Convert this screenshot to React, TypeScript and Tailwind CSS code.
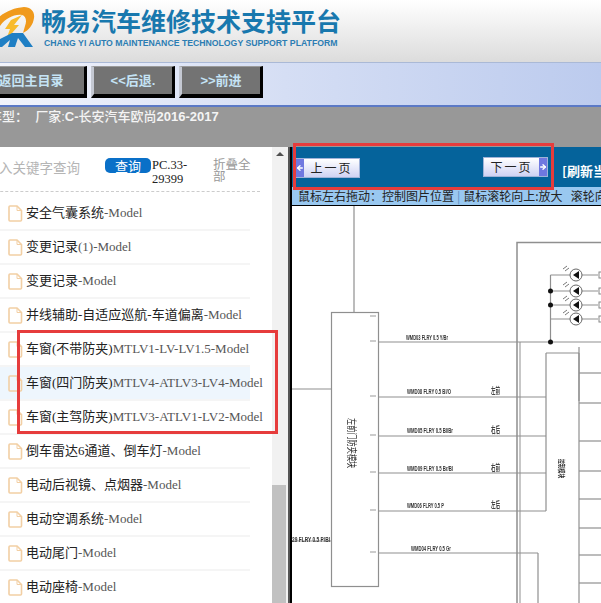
import { ArrowLeft, ArrowRight } from 'lucide-react';

const SERIF = "font-['Liberation_Serif','Noto_Sans_CJK_SC',serif]";

const rows = [
  { name: '安全气囊系统', suffix: '-Model' },
  { name: '变更记录', suffix: '(1)-Model' },
  { name: '变更记录', suffix: '-Model' },
  { name: '并线辅助-自适应巡航-车道偏离', suffix: '-Model' },
  { name: '车窗(不带防夹)', suffix: 'MTLV1-LV-LV1.5-Model' },
  { name: '车窗(四门防夹)', suffix: 'MTLV4-ATLV3-LV4-Model', active: true },
  { name: '车窗(主驾防夹)', suffix: 'MTLV3-ATLV1-LV2-Model' },
  { name: '倒车雷达6通道、倒车灯', suffix: '-Model' },
  { name: '电动后视镜、点烟器', suffix: '-Model' },
  { name: '电动空调系统', suffix: '-Model' },
  { name: '电动尾门', suffix: '-Model' },
  { name: '电动座椅', suffix: '-Model' },
];

function Logo() {
  return (
    <svg width="42" height="50" viewBox="-6 0 42 50" className="shrink-0">
      <path d="M-6 22 C2 13 12 8 24 7 C31 7 35 12 34 18 C33 25 29 30 23 33 L25 26 C27 21 26 16 22 15 C14 14 6 18 0 26 Z" fill="#f09a1c" />
      <path d="M22 15 L14 25 L19 25 L6 40 L10 29 L5 29 L11 20 Z" fill="#f8bb2c" />
      <path d="M12 33 L23 33 L33 47 L25 47 L18 38 L15 47 L8 47 L10 40 L2 47 L-6 47 L-2 40 Z" fill="#1f7fc4" />
    </svg>
  );
}

function NavButton({ label, wide }: { label: string; wide?: boolean }) {
  return (
    <button
      className={`${wide ? 'w-[112px]' : 'w-[84px]'} h-[32px] bg-[#737373] border-l-[3px] border-t-[1px] border-r-[3px] border-b-[4px] border-l-[#c4c8d2] border-t-[#9a9a9a] border-r-black border-b-black text-[13px] font-bold text-[#c5e3f5] font-['Liberation_Sans','Noto_Sans_CJK_SC',sans-serif]`}
    >
      {label}
    </button>
  );
}

function FileIcon() {
  return (
    <svg width="15" height="17" viewBox="0 0 15 17" className="shrink-0" fill="none" stroke="#f2cfa4" strokeWidth="1.6">
      <path d="M2 1h7l4.5 4.5V15a1 1 0 0 1-1 1H2a1 1 0 0 1-1-1V2a1 1 0 0 1 1-1z" />
      <path d="M9 1v4.500h4.500" strokeWidth="1" />
    </svg>
  );
}

function Sidebar() {
  return (
    <div className="w-[318px] shrink-0 flex bg-white">
      <div className="w-[302px] shrink-0">
        <div className="h-[45px] flex items-start pt-[11px] border-b border-dashed border-[#cccccc] w-[290px]">
          <div className="w-[135px] shrink-0 pl-[2px] text-[13.5px] leading-[18px] text-[#b5b5b5] whitespace-nowrap font-['Noto_Sans_CJK_SC',sans-serif]">
            请输入关键字查询
          </div>
          <div className="w-[46px] h-[15px] shrink-0 rounded-[5px] bg-[#0a70c8] text-white text-[13px] leading-[15px] text-center font-['Noto_Sans_CJK_SC',sans-serif]">
            查询
          </div>
          <div className={`w-[40px] shrink-0 ml-[1px] text-[12.5px] leading-[14px] text-[#222] ${SERIF}`}>PC.33-29399</div>
          <div className="w-[38px] shrink-0 ml-[21px] text-[12.5px] leading-[12px] text-[#999] font-['Noto_Sans_CJK_SC',sans-serif]">
            折叠全部
          </div>
        </div>
        <div className="w-[280px] mt-[5px]">
          {rows.map((row, i) => (
            <div
              key={i}
              className={`h-[34px] flex items-center gap-[3px] pl-[38px] whitespace-nowrap border-b-2 border-[#f5f5f5] ${row.active ? 'bg-[#eef6fd]' : ''}`}
            >
              <FileIcon />
              <span className={`text-[13px] text-[#222] ${SERIF}`}>
                {row.name}
                <span className="text-[#555]">{row.suffix}</span>
              </span>
            </div>
          ))}
        </div>
      </div>
      <div className="w-[16px] shrink-0 bg-[#f1f1f1] flex flex-col justify-between">
        <div className="h-[20px] flex justify-center pt-[5px]">
          <div className="w-0 h-0 border-x-[4px] border-x-transparent border-b-[4px] border-b-[#505050]" />
        </div>
        <div className="h-[118px] w-[14px] bg-[#c1c1c1]" />
      </div>
    </div>
  );
}

function PageButton({ label, dir }: { label: string; dir: 'prev' | 'next' }) {
  const arrow = (
    <div className="w-[8px] self-stretch flex items-center justify-center bg-[#6f78e0]">
      {dir === 'prev' ? (
        <ArrowLeft size={8} strokeWidth={4} color="#fff" />
      ) : (
        <ArrowRight size={8} strokeWidth={4} color="#fff" />
      )}
    </div>
  );
  return (
    <div className="h-[20px] flex items-center border border-[#9fb3d8] bg-gradient-to-b from-[#ffffff] to-[#cfd2f3]">
      {dir === 'prev' && arrow}
      <span className="w-[55px] text-center text-[12px] leading-[16px] tracking-[2px] text-[#222] whitespace-pre font-['Noto_Sans_CJK_SC',sans-serif]">
        {label}
      </span>
      {dir === 'next' && arrow}
    </div>
  );
}

function Schematic() {
  const stroke = '#8f8f8f';
  const wires: [number, number, number, number][] = [
    [62, 0, 62, 106],
    [86, 136, 310, 136],
    [86, 191, 254, 191],
    [86, 230, 254, 230],
    [86, 267, 254, 267],
    [86, 305, 254, 305],
    [86, 347, 246, 347],
    [246, 347, 246, 397],
    [0, 183, 39, 183],
    [0, 335, 39, 335],
    [254, 147, 287, 147],
    [254, 147, 254, 305],
    [287, 147, 287, 195],
    [287, 167, 310, 167],
    [287, 141, 287, 397],
    [287, 197, 310, 197],
    [287, 235, 310, 235],
    [287, 265, 310, 265],
    [287, 293, 310, 293],
    [287, 322, 310, 322],
    [287, 349, 310, 349],
    [287, 377, 310, 377],
    [258.500, 69, 258.500, 136],
    [258.500, 69, 306, 69],
    [258.500, 85, 306, 85],
    [258.500, 99, 306, 99],
    [258.500, 113, 306, 113],
  ];
  const labels: [string, number, number, number][] = [
    ['WMD03 FLRY 0.5 Y/Br', 114, 134, 42],
    ['WMD08 FLRY 0.5 Bl/O', 115, 188, 44],
    ['WMD05 FLRY 0.5 Bl/Br', 115, 227, 46],
    ['WMD09 FLRY 0.5 Br/Bl', 115, 265, 46],
    ['WMD06 FLRY 0.5 P', 115, 302, 37],
    ['WMD04 FLRY 0.5 Gr', 119, 345, 40],
    ['29 FLRY 0.5 P/Bl', 0, 336, 38],
  ];
  const sides: [string, number][] = [['左前', 188], ['右后', 227], ['右前', 265], ['左后', 302]];
  const pins = [111, 136, 191, 230, 267, 305, 347];
  return (
    <svg viewBox="0 0 310 397" className="w-[310px] h-[397px] block blur-[0.3px]">
      <rect x="39.500" y="106.500" width="47" height="274" fill="none" stroke={stroke} strokeWidth="1.200" />
      <path d="M225 397V36.500H310" fill="none" stroke={stroke} strokeWidth="1.500" />
      <path d="M228 397V136" fill="none" stroke={stroke} />
      {wires.map(([x1, y1, x2, y2], i) => (
        <line key={i} x1={x1} y1={y1} x2={x2} y2={y2} stroke={stroke} strokeWidth="1.200" />
      ))}
      {pins.map(y => (
        <line key={y} x1="78" y1={y - 1} x2="84" y2={y - 1} stroke="#999" strokeWidth="1" />
      ))}
      {[69, 85, 99, 113].map(y => (
        <g key={y}>
          <circle cx="284" cy={y} r="6" fill="#fff" stroke="#666" />
          <path d={`M281 ${y}l6 -4v8z`} fill="#111" />
          <path d={`M271 ${y - 6}l4 -3m-2 5l4 -3`} stroke="#777" />
          <rect x="307" y={y - 3} width="6" height="6" fill="#fff" stroke="#888" />
        </g>
      ))}
      {[85, 99, 136].map(y => (
        <circle key={y} cx="258.500" cy={y} r="2.500" fill="#111" />
      ))}
      {labels.map(([t, x, y, w]) => (
        <text key={t} x={x} y={y} textLength={w} lengthAdjust="spacingAndGlyphs" fontSize="7.500" fontWeight="700" fill="#333" fontFamily="Liberation Sans, sans-serif">
          {t}
        </text>
      ))}
      {sides.map(([t, y]) => (
        <text key={y} x="199" y={y} textLength="9" lengthAdjust="spacingAndGlyphs" fontSize="9" fontWeight="700" fill="#444" fontFamily="Noto Sans CJK SC, sans-serif">
          {t}
        </text>
      ))}
      <text fontSize="7.200" fill="#333" fontFamily="Noto Sans CJK SC, sans-serif" transform="translate(56 212) rotate(90) scale(1 1.500)">
        左前门防夹模块
      </text>
      <text fontSize="4.800" fontWeight="700" fill="#333" fontFamily="Noto Sans CJK SC, sans-serif" transform="translate(267 253) rotate(90) scale(1 1.500)">
        控制模块
      </text>
    </svg>
  );
}

export default function App() {
  return (
    <div className="relative w-[601px] h-[603px] overflow-hidden bg-white">
      <div className="w-[631px] -ml-[30px]">
        {/* header */}
        <div className="h-[62px] bg-gradient-to-b from-white to-[#dcdcdc] flex items-start pl-[24px]">
          <Logo />
          <div className="ml-[5px] pt-[4px]">
            <div className="text-[25px] leading-[32px] font-bold text-[#1878ae] whitespace-nowrap font-['Noto_Sans_CJK_SC',sans-serif]">
              畅易汽车维修技术支持平台
            </div>
            <div className="mt-[2px] ml-[3px] text-[8.700px] leading-[11px] font-bold text-[#2c7db3] whitespace-nowrap font-['Liberation_Sans',sans-serif]">
              CHANG YI AUTO MAINTENANCE TECHNOLOGY SUPPORT PLATFORM
            </div>
          </div>
        </div>
        {/* nav */}
        <div className="h-[45px] border-t border-[#aab9d6] border-b-[2px] border-b-[#5b79c6] bg-gradient-to-r from-[#f5f6fc] via-[#d5def4] to-[#bccbee] flex items-start gap-[4px] pl-[5px] pt-[3px]">
          <NavButton label="返回主目录" wide />
          <NavButton label="<<后退." />
          <NavButton label=">>前进" />
        </div>
        {/* vehicle info */}
        <div className="h-[40px] bg-[#989898] pl-[19px] pt-[1px] text-[13px] leading-[18px] font-medium text-[#f4f4f4] whitespace-pre font-['Liberation_Sans','Noto_Sans_CJK_SC',sans-serif]">
          车型：  厂家:<span className="font-bold">C-</span>长安汽车欧尚<span className="font-bold">2016-2017</span>
        </div>
        {/* body */}
        <div className="h-[456px] flex">
          <Sidebar />
          <div className="w-[2px] shrink-0 bg-[#555]" />
          <div className="flex-1 min-w-0 border-l-[2px] border-black overflow-hidden">
            <div className="h-[40px] bg-[#05639b] flex items-start pl-[3px] pt-[10px] whitespace-nowrap">
              <div className="mt-[1px]">
                <PageButton label="上一页" dir="prev" />
              </div>
              <div className="ml-[123px]">
                <PageButton label="下一页" dir="next" />
              </div>
              <div className="ml-[14px] mt-[6px] text-[13px] leading-[16px] font-bold text-white font-['Noto_Sans_CJK_SC',sans-serif]">
                [刷新当前页]
              </div>
            </div>
            <div className="h-[19px] bg-[#99c8f0] border-b border-black pl-[6px] text-[12px] leading-[17px] text-[#222] whitespace-pre font-['Noto_Sans_CJK_SC',sans-serif]">
              鼠标左右拖动：控制图片位置<span className="mx-[3px] text-[#5a8fc0]">|</span>鼠标滚轮向上:放大   滚轮向下:缩小
            </div>
            <Schematic />
          </div>
        </div>
      </div>
      {/* annotation frames */}
      <div className="absolute left-[17px] top-[330px] w-[261px] h-[104px] border-[3px] border-[#e63c3c]" />
      <div className="absolute left-[293px] top-[143px] w-[261px] h-[47px] border-[3px] border-[#e63c3c]" />
    </div>
  );
}
